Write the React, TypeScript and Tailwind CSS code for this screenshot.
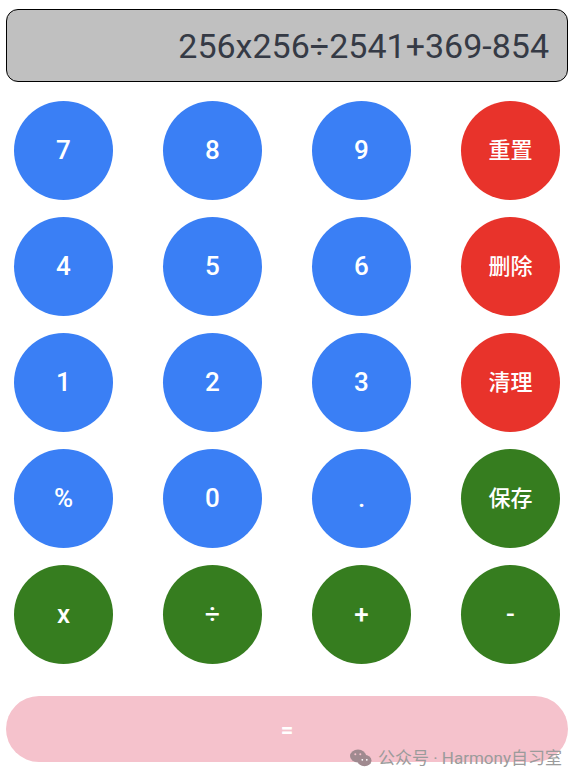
const font = { fontFamily: 'Roboto, "Noto Sans CJK SC", sans-serif' }

type Key = { label: string; color: string; cjk?: boolean }

const blue = 'bg-[#3a7ff5]'
const red = 'bg-[#e8332b]'
const green = 'bg-[#367d1f]'

const keys: Key[] = [
  { label: '7', color: blue },
  { label: '8', color: blue },
  { label: '9', color: blue },
  { label: '重置', color: red, cjk: true },
  { label: '4', color: blue },
  { label: '5', color: blue },
  { label: '6', color: blue },
  { label: '删除', color: red, cjk: true },
  { label: '1', color: blue },
  { label: '2', color: blue },
  { label: '3', color: blue },
  { label: '清理', color: red, cjk: true },
  { label: '%', color: blue },
  { label: '0', color: blue },
  { label: '.', color: blue },
  { label: '保存', color: green, cjk: true },
  { label: 'x', color: green },
  { label: '÷', color: green },
  { label: '+', color: green },
  { label: '-', color: green },
]

function WeChatIcon() {
  return (
    <svg width="22" height="18" viewBox="0 0 22 18" className="fill-[#a08a90]">
      <ellipse cx="8" cy="7" rx="8" ry="6.5" />
      <ellipse cx="14.5" cy="11.5" rx="7" ry="5.8" />
      <circle cx="5.3" cy="5.3" r="1" fill="#f5c2cc" />
      <circle cx="10.3" cy="5.3" r="1" fill="#f5c2cc" />
      <circle cx="12.3" cy="10.8" r="0.9" fill="#fff" />
      <circle cx="16.8" cy="10.8" r="0.9" fill="#fff" />
    </svg>
  )
}

export default function App() {
  return (
    <div className="relative h-[782px] w-[580px] overflow-hidden bg-white" style={font}>
      <div className="w-[574px]">
        <div className="mx-[6px] mt-[9px] flex h-[73px] items-center justify-end rounded-[12px] border-[1.5px] border-black bg-[#c0c0c0] pr-[18px]">
          <span className="text-[34px] leading-none text-[#353a45]">256x256÷2541+369-854</span>
        </div>

        <div className="mt-[19px] grid grid-cols-[repeat(4,99px)] gap-x-[50px] gap-y-[17px] px-[14px]">
          {keys.map((k) => (
            <div
              key={k.label}
              className={`flex h-[99px] w-[99px] items-center justify-center rounded-full ${k.color} font-medium text-white ${
                k.cjk ? 'text-[22px]' : 'text-[26px]'
              }`}
            >
              {k.label}
            </div>
          ))}
        </div>

        <div className="mx-[6px] mt-[32px] flex h-[66px] items-center justify-center rounded-full bg-[#f5c2cc] text-[22px] font-bold text-white">
          =
        </div>
      </div>

      <div className="absolute bottom-[11px] right-[18px] flex items-center gap-[6px] text-[17px] text-[#9b9b9b]">
        <WeChatIcon />
        <span>公众号 · Harmony自习室</span>
      </div>
    </div>
  )
}
